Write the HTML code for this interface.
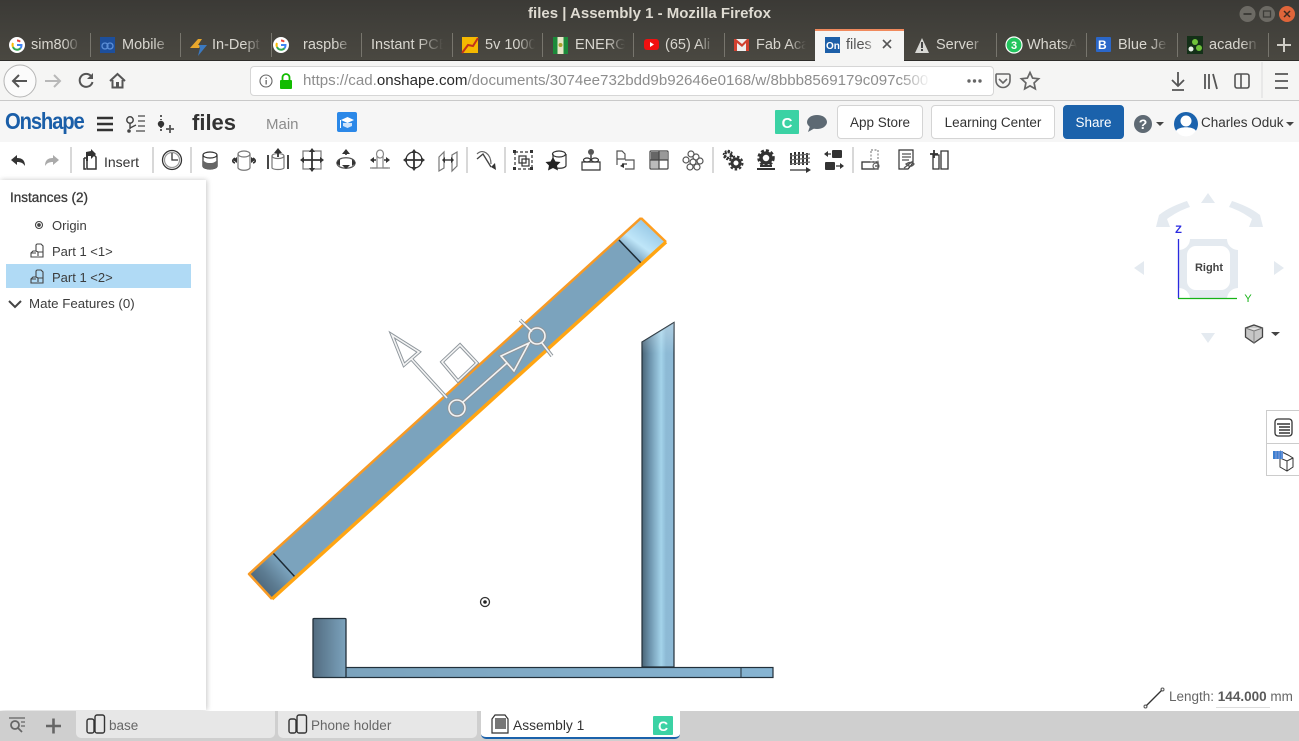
<!DOCTYPE html>
<html><head><meta charset="utf-8"><title>files | Assembly 1</title>
<style>
html,body{margin:0;padding:0;width:1299px;height:741px;overflow:hidden;background:#fff;font-family:"Liberation Sans",sans-serif;color:#333}
.a{position:absolute;white-space:nowrap}
#title{left:0;top:0;width:1299px;height:61px;background:linear-gradient(#3b3a36,#4a4841)}
.t{position:absolute;top:36px;height:20px;line-height:18px;font-size:14.5px;color:#d9d7d0;overflow:hidden;white-space:nowrap;-webkit-mask-image:linear-gradient(90deg,#000 65%,transparent);mask-image:linear-gradient(90deg,#000 65%,transparent)}
.s{position:absolute;top:33px;width:1px;height:24px;background:#77756d}
.b{position:absolute;box-sizing:border-box;background:#fff;border:1px solid #d4d4d4;border-radius:4px;font-size:13.5px;text-align:center;color:#333}
.p{position:absolute;font-size:13px;color:#3c3c3c;white-space:nowrap;line-height:16px}
.bt{position:absolute;top:711px;height:27px;background:#e7e7e7;border-radius:0 0 5px 5px;font-size:13.5px;line-height:29px;color:#666;box-sizing:border-box}
</style></head><body>
<div class="a" id="title"></div>
<div class="a" style="left:0;top:5px;width:1299px;text-align:center;font-size:15px;font-weight:bold;color:#dfdbd2;line-height:18px">files | Assembly 1 - Mozilla Firefox</div>

<!-- window buttons -->
<svg class="a" style="left:1235px;top:2px" width="64" height="24">
<circle cx="12.500" cy="12" r="8" fill="#6c6a64"/><rect x="8.500" y="11" width="8" height="2" fill="#3d3c38"/>
<circle cx="32" cy="12" r="8" fill="#6c6a64"/><rect x="28.500" y="9" width="7" height="6" fill="none" stroke="#3d3c38" stroke-width="1.300"/>
<circle cx="52" cy="12" r="8" fill="#e0653a"/><path d="M49 9l6 6M55 9l-6 6" stroke="#3d2a20" stroke-width="1.500"/></svg>

<!-- tab separators -->
<div class="s" style="left:90px"></div><div class="s" style="left:180px"></div><div class="s" style="left:271px"></div><div class="s" style="left:361px"></div><div class="s" style="left:452px"></div><div class="s" style="left:542px"></div><div class="s" style="left:633px"></div><div class="s" style="left:724px"></div><div class="s" style="left:996px"></div><div class="s" style="left:1086px"></div><div class="s" style="left:1177px"></div><div class="s" style="left:1268px"></div>

<!-- active tab -->
<div class="a" style="left:815px;top:29px;width:89px;height:32px;background:#f5f5f4"></div>
<div class="a" style="left:815px;top:29px;width:89px;height:2px;background:#f08a5d"></div>

<div class="t" style="left:31px;width:50px">sim800</div>
<div class="t" style="left:122px;width:50px">Mobile</div>
<div class="t" style="left:212px;width:50px">In-Dept</div>
<div class="t" style="left:303px;width:50px">raspbe</div>
<div class="t" style="left:371px;width:72px">Instant PCB</div>
<div class="t" style="left:485px;width:50px">5v 1000</div>
<div class="t" style="left:575px;width:50px">ENERGY</div>
<div class="t" style="left:665px;width:50px">(65) Ali</div>
<div class="t" style="left:756px;width:50px">Fab Aca</div>
<div class="t" style="left:846px;width:30px;color:#555">files</div>
<div class="t" style="left:936px;width:50px">Server</div>
<div class="t" style="left:1027px;width:50px">WhatsA</div>
<div class="t" style="left:1118px;width:50px">Blue Je</div>
<div class="t" style="left:1209px;width:50px">acaden</div>

<!-- favicons -->
<svg class="a" style="left:0;top:30px" width="1299" height="30">
<g><circle cx="17" cy="15" r="8" fill="#fff"/><path d="M17 10.500a4.500 4.500 0 0 1 3.200 1.200" stroke="#e94235" stroke-width="2" fill="none"/><path d="M13 13a4.500 4.500 0 0 0 0 4" stroke="#fbbc05" stroke-width="2" fill="none"/><path d="M13 17a4.500 4.500 0 0 0 7.500 1.200" stroke="#34a853" stroke-width="2" fill="none"/><path d="M17 15h4.500a4.500 4.500 0 0 1-1 3.200" stroke="#4285f4" stroke-width="2" fill="none"/></g>
<rect x="100" y="7" width="15" height="16" fill="#1d4f9c"/><circle cx="105" cy="16" r="3" fill="none" stroke="#5b8ed6" stroke-width="1.300"/><circle cx="110" cy="16" r="3" fill="none" stroke="#5b8ed6" stroke-width="1.300"/>
<path d="M190 18l8-9h4l-4 6h3l-2 3z" fill="#e8a72c"/><path d="M199 15h8l-9 11 2-8z" fill="#3b79c0"/>
<g transform="translate(264,0)"><circle cx="17" cy="15" r="8" fill="#fff"/><path d="M17 10.500a4.500 4.500 0 0 1 3.200 1.200" stroke="#e94235" stroke-width="2" fill="none"/><path d="M13 13a4.500 4.500 0 0 0 0 4" stroke="#fbbc05" stroke-width="2" fill="none"/><path d="M13 17a4.500 4.500 0 0 0 7.500 1.200" stroke="#34a853" stroke-width="2" fill="none"/><path d="M17 15h4.500a4.500 4.500 0 0 1-1 3.200" stroke="#4285f4" stroke-width="2" fill="none"/></g>
<rect x="462" y="7" width="16" height="16" fill="#f5b800"/><path d="M462 23l6-8 5 1 5-8" stroke="#c2311c" stroke-width="2" fill="none"/>
<rect x="553" y="7" width="15" height="17" fill="#1c8a3a"/><rect x="557.500" y="7" width="6" height="17" fill="#e8e6c8"/><circle cx="560.500" cy="15" r="2" fill="#a8a02a"/>
<rect x="644" y="9" width="15" height="11" rx="3" fill="#f01010"/><path d="M650 12l4 2.500-4 2.500z" fill="#fff"/>
<rect x="734" y="9" width="15" height="12" fill="#eee"/><path d="M734 9v12h3v-8l5 4 4-4v8h3V9h-2l-5 5-6-5z" fill="#d0402f"/>
<rect x="825" y="7" width="15" height="16" fill="#1d5fa8"/><text x="826" y="19" font-family="Liberation Sans" font-size="10" font-weight="bold" fill="#fff">On</text>
<path d="M883 10l8 8M891 10l-8 8" stroke="#555" stroke-width="1.600"/>
<path d="M915 23l7-15 7 15z" fill="#d8d8d4"/><rect x="921" y="12" width="2" height="6" fill="#444"/><rect x="921" y="19" width="2" height="2" fill="#444"/>
<circle cx="1014" cy="15" r="8" fill="#22c55e" stroke="#fff" stroke-width="1.200"/><text x="1011" y="19" font-family="Liberation Sans" font-size="11" font-weight="bold" fill="#fff">3</text>
<rect x="1096" y="7" width="15" height="15" rx="1" fill="#2b67c9"/><text x="1098" y="19" font-family="Liberation Sans" font-size="12" font-weight="bold" fill="#fff">B</text>
<rect x="1187" y="6" width="16" height="18" fill="#143018"/><circle cx="1195" cy="12" r="3" fill="#6fc23a"/><circle cx="1199" cy="18" r="3" fill="#6fc23a"/><circle cx="1191" cy="19" r="2.500" fill="#e6efe6"/>
<path d="M1277 15h14M1284 8v14" stroke="#cfcdc6" stroke-width="2"/>
</svg>

<!-- nav bar -->
<div class="a" style="left:0;top:61px;width:1299px;height:39px;background:#f5f5f4"></div>
<div class="a" style="left:0;top:60px;width:815px;height:1px;background:#2e2d2a"></div>
<div class="a" style="left:904px;top:60px;width:395px;height:1px;background:#2e2d2a"></div>
<div class="a" style="left:250px;top:66px;width:744px;height:30px;background:#fff;border:1px solid #d6d6d6;border-radius:4px;box-sizing:border-box"></div>
<div class="a" style="left:303px;top:72px;font-size:15.1px;line-height:18px;color:#8d8d8d;width:628px;overflow:hidden;-webkit-mask-image:linear-gradient(90deg,#000 95%,transparent);mask-image:linear-gradient(90deg,#000 95%,transparent)">https://cad.<span style="color:#2a2a2a">onshape.com</span>/documents/3074ee732bdd9b92646e0168/w/8bbb8569179c097c500</div>
<svg class="a" style="left:0;top:61px" width="1299" height="39">
<circle cx="20" cy="20" r="16" fill="#fbfbfb" stroke="#b5b5b5"/>
<path d="M13 20h14M19 14l-6 6 6 6" stroke="#555" stroke-width="2" fill="none"/>
<path d="M45 20h15M54 14l6 6-6 6" stroke="#b8b8b8" stroke-width="2" fill="none"/>
<path d="M91 15a6.500 6.500 0 1 0 1.500 6" stroke="#555" stroke-width="2" fill="none"/><path d="M93 12v6h-6z" fill="#555"/>
<path d="M110 20l7.500-7 7.500 7M112.500 19v7.500h10V19" stroke="#555" stroke-width="2" fill="none"/><rect x="116" y="21" width="3" height="5" fill="#555"/>
<circle cx="266" cy="20" r="6" fill="none" stroke="#666" stroke-width="1.100"/><rect x="265.500" y="19" width="1.300" height="4.500" fill="#666"/><rect x="265.500" y="16.500" width="1.300" height="1.300" fill="#666"/>
<rect x="280" y="19" width="12" height="9" rx="1" fill="#12bc00"/><path d="M282.500 19v-2.500a3.500 3.500 0 0 1 7 0V19" stroke="#12bc00" stroke-width="1.800" fill="none"/>
<circle cx="969" cy="20" r="1.700" fill="#666"/><circle cx="974.500" cy="20" r="1.700" fill="#666"/><circle cx="980" cy="20" r="1.700" fill="#666"/>
<path d="M996.500 13h12a1.500 1.500 0 0 1 1.500 1.500v5a7 7 0 0 1-14 0v-5a1.500 1.500 0 0 1 .5-1.500zM999 18l4 4 4-4" stroke="#666" stroke-width="1.600" fill="none"/>
<path d="M1030 11.500l2.600 5.600 6 .7-4.500 4.100 1.200 6-5.300-3-5.300 3 1.200-6-4.500-4.100 6-.7z" fill="none" stroke="#666" stroke-width="1.700"/>
<path d="M1178 11v13M1172 19l6 6 6-6M1172 29h12" stroke="#555" stroke-width="1.800" fill="none"/>
<path d="M1205 13v15M1209 13v15M1213 13l4 15" stroke="#555" stroke-width="1.800" fill="none"/>
<rect x="1235" y="13" width="14" height="14" rx="2" fill="none" stroke="#555" stroke-width="1.600"/><path d="M1241 13v14" stroke="#555" stroke-width="1.600"/>
<path d="M1262 1v36" stroke="#dcdcdc"/>
<path d="M1275 13h13M1275 20h13M1275 27h13" stroke="#555" stroke-width="1.800"/>
</svg>

<!-- Onshape header -->
<div class="a" style="left:0;top:100px;width:1299px;height:42px;background:#f6f6f6;border-top:1px solid #c9c9c9;box-sizing:border-box"></div>
<div class="a" style="left:5px;top:108px;font-size:23px;font-weight:bold;letter-spacing:-1.300px;color:#1a5ea8;line-height:27px;transform:scaleX(.88);transform-origin:0 0">Onshape</div>
<div class="a" style="left:192px;top:109px;font-size:22px;font-weight:bold;color:#333;line-height:28px">files</div>
<div class="a" style="left:266px;top:116px;font-size:15px;color:#8c8c8c;line-height:18px">Main</div>
<svg class="a" style="left:0;top:100px" width="1299" height="42">
<path d="M97 18h16M97 24h16M97 30h16" stroke="#333" stroke-width="2.400"/>
<circle cx="130" cy="20" r="3.200" fill="none" stroke="#444" stroke-width="1.500"/><circle cx="129" cy="31" r="1.800" fill="#444"/><path d="M130 23v6M130 28l6-3" stroke="#444" stroke-width="1.400" fill="none"/><path d="M138 16h7M138 21h7M138 26h7M136 31h9" stroke="#666" stroke-width="1.500"/>
<path d="M161 15v2M161 29v2" stroke="#333" stroke-width="1.600"/><circle cx="161" cy="24" r="3.200" fill="#333"/><path d="M161 19v1M161 27v1" stroke="#333" stroke-width="1.600"/><path d="M166 29h8M170 25v8" stroke="#555" stroke-width="1.800"/>
<rect x="337" y="12" width="20" height="20" rx="2" fill="#2b88e8"/><path d="M341 20l6.500-3 6.500 3-6.500 3z" fill="#fff"/><path d="M343 23v3l4.500 2 4.500-2v-3" fill="#cfe4fb"/><path d="M340.500 20v8" stroke="#fff"/>
<rect x="775" y="10" width="24" height="24" rx="1" fill="#3bd2a4"/><text x="787" y="28" text-anchor="middle" font-family="Liberation Sans" font-size="15" font-weight="bold" fill="#fff">C</text>
<ellipse cx="817" cy="22" rx="10" ry="7" fill="#5d6973"/><path d="M810 26l-2 6 7-4z" fill="#5d6973"/>
<circle cx="1143" cy="24" r="9" fill="#5f6a74"/><text x="1143" y="29" text-anchor="middle" font-family="Liberation Sans" font-size="14" font-weight="bold" fill="#fff">?</text>
<path d="M1156 22h8l-4 4z" fill="#444"/>
<circle cx="1186" cy="24" r="12" fill="#1a62ad"/><circle cx="1186" cy="21" r="5.500" fill="#fff"/><path d="M1176 31c2-5 18-5 20 0a12 12 0 0 1-20 0z" fill="#fff"/>
<path d="M1286 22h8l-4 4z" fill="#444"/>
</svg>
<div class="b" style="left:837px;top:105px;width:86px;height:34px;line-height:34px">App Store</div>
<div class="b" style="left:931px;top:105px;width:124px;height:34px;line-height:34px">Learning Center</div>
<div class="b" style="left:1063px;top:105px;width:61px;height:34px;line-height:34px;background:#1b62ab;border-color:#1b62ab;color:#fff">Share</div>
<div class="a" style="left:1201px;top:115px;font-size:13.500px;line-height:16px;color:#333">Charles Oduk</div>

<!-- toolbar -->
<div class="a" style="left:104px;top:154px;font-size:14px;line-height:16px;color:#333">Insert</div>
<svg class="a" style="left:0;top:142px" width="1299" height="38" fill="none" stroke="#333" stroke-width="1.200">
<g stroke="#d8d8d8" stroke-width="2"><path d="M71 5v26M153 5v26M191 5v26M467 5v26M505 5v26M713 5v26M853 5v26"/></g>
<path d="M11 18l6-5v3c5 0 8 2 8 8-2-3-4-4-8-4v3z" fill="#333" stroke="none"/>
<path d="M59 18l-6-5v3c-5 0-8 2-8 8 2-3 4-4 8-4v3z" fill="#aaa" stroke="none"/>
<path d="M84 16h3v11h9V15l-2-2" stroke-width="1.500"/><path d="M84 16v11h2" stroke-width="1.500"/><path d="M86 10l5-1V7l5 5-5 5v-3h-3v5h-2z" fill="#333" stroke="none"/>
<circle cx="172" cy="18" r="9.500" stroke-width="1.300"/><circle cx="172" cy="18" r="7.500" stroke="#999"/><path d="M172 11v7h6" stroke-width="1.300"/>
<!-- extrude -->
<ellipse cx="210" cy="13" rx="7" ry="3"/><path d="M203 13v11c0 4 14 4 14 0V13"/><path d="M203 18c2 2 3 3 7 3s5-1 7-3v7c0 3-14 3-14 0z" fill="#666" stroke="none"/>
<!-- revolve -->
<g transform="translate(244,18)"><ellipse cx="0" cy="-6" rx="6" ry="3" stroke="#777"/><path d="M-6-6V8c2 3 10 3 12 0V-6" stroke="#777"/><path d="M-9-2c-3 2-3 4 0 5M9-2c3 2 3 4 0 5" stroke-width="1.600"/><path d="M-11 0l4-3v6zM11 0l-4-3v6z" fill="#333" stroke="none"/></g>
<!-- sweep -->
<g transform="translate(278,18)"><path d="M-10-5V9M10-5V9" stroke-width="1.800"/><ellipse cx="0" cy="-4" rx="6" ry="2.500" stroke="#777"/><path d="M-6-4V8c2 2 10 2 12 0V-4" stroke="#777"/><path d="M0-3v-6" stroke-width="1.800"/><path d="M0-12l-4 5h8z" fill="#333" stroke="none"/></g>
<!-- move -->
<g transform="translate(312,18)"><rect x="-9" y="-9" width="18" height="18" stroke="#777"/><path d="M-10 0h20M0-10v20" stroke-width="1.800"/><path d="M0-12l-3 4h6zM0 12l-3-4h6zM-12 0l4-3v6zM12 0l-4-3v6z" fill="#333" stroke="none"/></g>
<g transform="translate(346,18)"><path d="M-9 3c0-7 18-7 18 0s-18 7-18 0z" stroke="#555"/><path d="M0-5v-4" stroke-width="1.600"/><path d="M0-11l-4 5h8zM-10 3l4-4v7zM10 3l-4-4v7zM0 9l-4-4h8z" fill="#333" stroke="none"/></g>
<g transform="translate(380,18)"><ellipse cx="0" cy="-6" rx="3.500" ry="4" stroke="#888"/><path d="M-3-4V8H-8M3-4V8H8" stroke="#888"/><path d="M-10 8h20" stroke="#888"/><path d="M-8 0h4M4 0h4" stroke-width="1.600"/><path d="M-10 0l4-3v6zM10 0l-4-3v6z" fill="#333" stroke="none"/></g>
<g transform="translate(414,18)"><circle r="8" stroke-width="1.300"/><path d="M-9 0h18M0-9v18" stroke-width="1.800"/><path d="M0-11l-3 4h6zM0 11l-3-4h6zM-11 0l4-3v6zM11 0l-4-3v6z" fill="#333" stroke="none"/></g>
<g transform="translate(448,18)" stroke="#777"><path d="M-9-3l5-5V8l-5 3zM9-8V6l-5 5V-5z"/><path d="M-3 0h6" stroke="#333" stroke-width="1.400"/><path d="M-6 0l3-3v6zM6 0l-3-3v6z" fill="#333" stroke="none"/></g>
<!-- arrow ref -->
<g transform="translate(486,18)"><path d="M-9-6c6-6 14 0 14 10" stroke="#666"/><path d="M-9-1l6-5 8 13" stroke="#444" stroke-width="1.400"/><path d="M9 3l-4 4 5 3z" fill="#333" stroke="none"/></g>
<!-- group -->
<g transform="translate(523,18)"><rect x="-8" y="-8" width="17" height="17" stroke-dasharray="3 2"/><rect x="-10" y="-10" width="3" height="3" fill="#333" stroke="none"/><rect x="7" y="-10" width="3" height="3" fill="#333" stroke="none"/><rect x="-10" y="7" width="3" height="3" fill="#333" stroke="none"/><rect x="7" y="7" width="3" height="3" fill="#333" stroke="none"/><rect x="-4" y="-4" width="7" height="7"/><rect x="-1" y="-1" width="7" height="7"/></g>
<g transform="translate(557,18)"><ellipse cx="2" cy="-6" rx="6.500" ry="3"/><path d="M-4-6v12c2 3 11 3 13 0V-6"/><path d="M-4-3l2.500 4.500 5 .5-3.500 3.500 1 5-5-2.500-5 2.500 1-5-3.500-3.500 5-.5z" fill="#222" stroke="none"/></g>
<g transform="translate(591,18)"><circle cx="0" cy="-8" r="3" fill="#555" stroke="none"/><path d="M-9 2h18v8H-9z"/><ellipse cx="-4" cy="0" rx="3.500" ry="2"/><ellipse cx="4" cy="0" rx="3.500" ry="2"/><path d="M0-5v5" stroke-width="1.400"/></g>
<g transform="translate(625,18)" stroke="#555"><path d="M-8-9h5l3 3v5h-8zM-8-3v8M0 0l9 0v9H0"/><path d="M-3 4h5" stroke="#333"/><path d="M-5 6l4-3v5z" fill="#333" stroke="none"/></g>
<g transform="translate(659,18)"><rect x="-9" y="-9" width="18" height="18" rx="1" stroke="#444"/><rect x="-8" y="-8" width="8" height="8" fill="#666" stroke="none"/><rect x="0" y="-8" width="8" height="8" fill="#999" stroke="none"/><rect x="-8" y="0" width="8" height="8" fill="#bbb" stroke="none"/><path d="M-9 0h18M0-9v18" stroke="#444"/></g>
<g transform="translate(693,18)" stroke="#555"><circle cx="-2" cy="-6" r="3"/><circle cx="3" cy="-3" r="3"/><circle cx="-7" cy="0" r="3"/><circle cx="0" cy="2" r="3"/><circle cx="7" cy="1" r="3"/><circle cx="-3" cy="7" r="3"/><circle cx="4" cy="7" r="3"/></g>
<!-- gears -->
<g transform="translate(732,18)"><circle cx="-4" cy="-5" r="3" stroke-width="2.400" stroke-dasharray="2.500 .8"/><circle cx="-4" cy="-5" r="4.500" stroke-width="1.500" stroke-dasharray="2 1.500"/><circle cx="4" cy="3" r="4" stroke-width="3"/><circle cx="4" cy="3" r="6.500" stroke-width="2" stroke-dasharray="2.500 2"/></g>
<g transform="translate(766,18)"><circle cy="-2" r="5" stroke-width="3.500"/><circle cy="-2" r="7.500" stroke-width="2.500" stroke-dasharray="3 2"/><path d="M-9 9h18" stroke-width="2"/><path d="M-6 6h12" stroke-width="2"/></g>
<g transform="translate(800,18)"><path d="M-9-7v12M-5-8v13M-1-8v13M3-8v13M7-7v12" stroke-width="2"/><path d="M-10-4l20-2M-10 0l20-2M-10 4l20-2" stroke="#666"/><path d="M-10 10h17" stroke-width="1.200"/><path d="M11 10l-5-3v6z" fill="#333" stroke="none"/></g>
<g transform="translate(834,18)"><rect x="-2" y="-10" width="10" height="8" rx="1" fill="#333" stroke="none"/><rect x="-9" y="2" width="10" height="8" rx="1" fill="#333" stroke="none"/><path d="M-9-6h6M2 6h7" stroke-width="1.300"/><path d="M-10-6l4-3v6zM10 6l-4-3v6z" fill="#333" stroke="none"/></g>
<!-- end -->
<g transform="translate(872,18)"><rect x="-10" y="2" width="16" height="7" stroke-width="1.300"/><rect x="-1" y="-10" width="7" height="12" stroke="#888" stroke-dasharray="2 1.500"/><circle cx="4" cy="6" r="3" stroke="#666"/><circle cx="4" cy="6" r="1" fill="#666" stroke="none"/></g>
<g transform="translate(906,18)"><path d="M-7-10H7V3L2 9H-7z"/><path d="M-4-6H5M-4-3H5M-4 0H3" stroke="#555"/><path d="M-2 8l9-7M0 4c3-2 6-2 8 0-2 3-5 3-8 0z" stroke="#555" stroke-width="1.300"/></g>
<g transform="translate(940,18)"><path d="M-7-5V9h6V-5zM1-9h7v18H1z" stroke-width="1.300"/><path d="M-10-6h8M-6-10v8" stroke-width="1.800"/></g>
</svg>

<!-- left panel -->
<div class="a" style="left:0;top:180px;width:206px;height:530px;background:#fff;box-shadow:1px 0 5px rgba(0,0,0,.22)"></div>
<div class="a" style="left:6px;top:264px;width:185px;height:24px;background:#b0daf5"></div>
<div class="p" style="left:10px;top:190px;font-size:13.500px;color:#3a3a3a;-webkit-text-stroke:.3px #3a3a3a">Instances (2)</div>
<div class="p" style="left:52px;top:218px">Origin</div>
<div class="p" style="left:52px;top:244px">Part 1 &lt;1&gt;</div>
<div class="p" style="left:52px;top:270px">Part 1 &lt;2&gt;</div>
<div class="p" style="left:29px;top:296px;font-size:13.300px">Mate Features (0)</div>
<svg class="a" style="left:0;top:216px" width="60" height="100" fill="none" stroke="#444" stroke-width="1.100">
<circle cx="39" cy="9" r="3.500"/><circle cx="39" cy="9" r="1.300" fill="#444"/>
<path d="M31 41h12V30l-2-2h-4l-1 1v6h-3l-2 2zM36 35l2 1v4M38 36h5M31 37h5"/>
<path d="M31 67h12V56l-2-2h-4l-1 1v6h-3l-2 2zM36 61l2 1v4M38 62h5M31 63h5"/>
<path d="M9 85l6 6 6-6" stroke-width="2"/>
</svg>

<!-- CAD drawing -->
<svg class="a" style="left:0;top:180px" width="1299" height="531" viewBox="0 180 1299 531">
<defs>
<linearGradient id="cylT" gradientUnits="userSpaceOnUse" x1="633" y1="256" x2="653" y2="229"><stop offset="0" stop-color="#7fa8c4"/><stop offset=".4" stop-color="#bfe6f9"/><stop offset="1" stop-color="#9bcbe7"/></linearGradient>
<linearGradient id="cylB" gradientUnits="userSpaceOnUse" x1="284" y1="566" x2="260" y2="587"><stop offset="0" stop-color="#7ba3bd"/><stop offset=".6" stop-color="#5d7c92"/><stop offset="1" stop-color="#4e697e"/></linearGradient>
<linearGradient id="blk" x1="0" x2="1" y1="0" y2="0"><stop offset="0" stop-color="#526c80"/><stop offset="1" stop-color="#7ca3bd"/></linearGradient>
<linearGradient id="col" x1="0" x2="1" y1="0" y2="0"><stop offset="0" stop-color="#4a6476"/><stop offset=".25" stop-color="#6d94ad"/><stop offset=".6" stop-color="#a3d3ea"/><stop offset=".75" stop-color="#8dbad5"/><stop offset="1" stop-color="#8ebad6"/></linearGradient>
<linearGradient id="colV" x1="0" x2="0" y1="0" y2="1"><stop offset="0" stop-color="#fff" stop-opacity=".3"/><stop offset=".4" stop-color="#fff" stop-opacity="0"/></linearGradient>
<linearGradient id="bs" x1="0" x2="1" y1="0" y2="0"><stop offset="0" stop-color="#7ba3bd"/><stop offset="1" stop-color="#86b4d2"/></linearGradient>
</defs>
<!-- beam -->
<polygon points="641,218 666,242 272,599 249,574" fill="#7ba3bd"/>
<polygon points="641,218 666,242 642,264 619,240" fill="url(#cylT)"/>
<polygon points="273,553 295,577 272,599 249,574" fill="url(#cylB)"/>
<path d="M619 240L642 264M273 553L295 577" stroke="#1e2b35" stroke-width="1.500"/>
<path d="M641 218L666 242" stroke="#ff9e1f" stroke-width="2.500"/>
<path d="M641 218L249 574L272 599" stroke="#f79a25" stroke-width="2.500" fill="none" stroke-linejoin="round"/>
<path d="M666 242L272 599" stroke="#ffa512" stroke-width="3.500"/>
<!-- gizmo -->
<g fill="none" stroke="#8e969c" stroke-width="3.500">
<path d="M520 320L532 331.500M542 343L552 356M447 398L411 358.500M392 335L419 352L404 365ZM460 345L477 363L458 381L442 362ZM463 402L507 363M529 343L501 356L514 371Z"/>
<circle cx="457" cy="408" r="8"/><circle cx="537" cy="336" r="8"/>
</g>
<g fill="none" stroke="#f4f4f4" stroke-width="1.600">
<path d="M520 320L532 331.500M542 343L552 356M447 398L411 358.500M392 335L419 352L404 365ZM460 345L477 363L458 381L442 362ZM463 402L507 363M529 343L501 356L514 371Z"/>
<circle cx="457" cy="408" r="8"/><circle cx="537" cy="336" r="8"/>
</g>
<!-- origin -->
<circle cx="485" cy="602" r="4.500" fill="none" stroke="#333" stroke-width="1.300"/><circle cx="485" cy="602" r="1.800" fill="#222"/>
<!-- bottom part -->
<rect x="345.500" y="667.500" width="427.500" height="10" fill="url(#bs)" stroke="#22303a" stroke-width="1.200"/>
<path d="M741 667v10" stroke="#22303a"/>
<rect x="313" y="618.500" width="33" height="59" rx="1" fill="url(#blk)" stroke="#22303a" stroke-width="1.300"/>
<path d="M642 342L674 322.500V667H642Z" fill="url(#col)" stroke="#22303a" stroke-width="1.200"/>
<path d="M642 342L674 322.500V400H642Z" fill="url(#colV)"/>
<!-- nav cube -->
<g fill="#e4eaf0">
<path d="M1208 193l7 10h-14zM1134 268l10-7v14zM1284 268l-10-7v14zM1208 343l-7-10h14z"/>
<path d="M1156 227L1159 215C1168 208 1178 204 1187 201L1190 207C1181 210 1174 214 1167 219L1170 227Z"/>
<path d="M1263 227L1260 215C1251 208 1241 204 1232 201L1229 207C1238 210 1245 214 1252 219L1249 227Z"/>
<path d="M1190 239H1227A11 11 0 0 0 1238 250V288A11 11 0 0 0 1227 299H1190A11 11 0 0 0 1179 288V250A11 11 0 0 0 1190 239Z"/>
</g>
<rect x="1187" y="246" width="43" height="44" rx="9" fill="#fff"/>
<path d="M1178.500 239V298" stroke="#2a2ae0" stroke-width="1.300"/>
<path d="M1178 298.500H1237" stroke="#17b317" stroke-width="1.300"/>
<text x="1178.500" y="233" text-anchor="middle" font-family="Liberation Sans" font-size="11" font-weight="bold" fill="#2a2ae0">Z</text>
<text x="1248" y="302" text-anchor="middle" font-family="Liberation Sans" font-size="11" fill="#17b317">Y</text>
<text x="1209" y="271" text-anchor="middle" font-family="Liberation Sans" font-size="11" font-weight="bold" fill="#444">Right</text>
<g><path d="M1254 325l8.500 3v9l-8.500 6-8.500-6v-9z" fill="#c6c6c6" stroke="#444" stroke-width="1.300"/><path d="M1245.500 328l8.500 3 8.500-3" fill="#e2e2e2" stroke="#777"/><path d="M1254 331v12" stroke="#888"/></g>
<path d="M1271 332h9l-4.500 4z" fill="#444"/>
</svg>

<!-- right buttons -->
<div class="a" style="left:1266px;top:410px;width:33px;height:66px;border:1px solid #ccc;border-right:0;box-sizing:border-box;background:#fff"></div>
<div class="a" style="left:1266px;top:443px;width:33px;height:1px;background:#ccc"></div>
<svg class="a" style="left:1266px;top:410px" width="33" height="66" fill="none" stroke="#333">
<rect x="9" y="9" width="17" height="17" rx="3" stroke-width="1.300"/><path d="M11 14h13M13 17h11M13 20h11M13 23h11" stroke-width="1.500"/>
<path d="M14 41l8 4 5 3v9l-6 4-7-4v-9l7 3 6-3M21 51v10" stroke-width="1"/><rect x="7" y="41" width="10" height="8" fill="#3b7fd0" stroke="none"/><path d="M10 41v8M13 41v8M16 41v8" stroke="#aad" stroke-width=".7"/>
</svg>

<!-- length -->
<svg class="a" style="left:1143px;top:686px" width="24" height="24" fill="none"><path d="M3 20L19 4" stroke="#333" stroke-width="1.300"/><circle cx="2.500" cy="20.500" r="1.500" stroke="#555"/><circle cx="19.500" cy="3.500" r="1.500" stroke="#555"/></svg>
<div class="a" style="left:1169px;top:689px;font-size:13.500px;line-height:16px;color:#666">Length: <b style="color:#5a5a5a">144.000</b> mm</div>
<div class="a" style="left:1216px;top:707px;width:54px;height:1px;background:#ddd"></div>

<!-- bottom bar -->
<div class="a" style="left:0;top:711px;width:1299px;height:30px;background:#cfcfcf"></div>
<svg class="a" style="left:0;top:711px" width="76" height="30" fill="none" stroke="#666"><path d="M9 7h16" stroke-width="1.300"/><circle cx="15" cy="14" r="4" stroke-width="1.800"/><path d="M18 17l4 4" stroke-width="1.800"/><path d="M21 11h4M21 15h4" stroke-width="1.300"/><path d="M46 15h15M53.500 7.500v15" stroke-width="2.600"/></svg>
<div class="bt" style="left:76px;width:199px;padding-left:33px">base</div>
<div class="bt" style="left:278px;width:199px;padding-left:33px">Phone holder</div>
<div class="bt" style="left:481px;width:199px;height:28px;background:#fff;padding-left:32px;color:#333;border-bottom:2px solid #1b62ab;font-size:13.800px">Assembly 1</div>
<svg class="a" style="left:0;top:711px" width="690" height="30" fill="none" stroke="#333" stroke-width="1.400">
<rect x="87" y="8" width="7" height="14" rx="2"/><rect x="95" y="4" width="9.500" height="18" rx="2"/><rect x="289" y="8" width="7" height="14" rx="2"/><rect x="297" y="4" width="9.500" height="18" rx="2"/>
<path d="M492 8l3-4h10l3 4v14h-16z" stroke-width="1.200"/><rect x="495" y="7" width="11" height="11" fill="#777" stroke="none"/>
<rect x="653" y="5" width="20" height="19" rx="1" fill="#3bd2a4" stroke="none"/><text x="663" y="20" text-anchor="middle" font-family="Liberation Sans" font-size="14" font-weight="bold" fill="#fff" stroke="none">C</text>
</svg>
</body></html>
